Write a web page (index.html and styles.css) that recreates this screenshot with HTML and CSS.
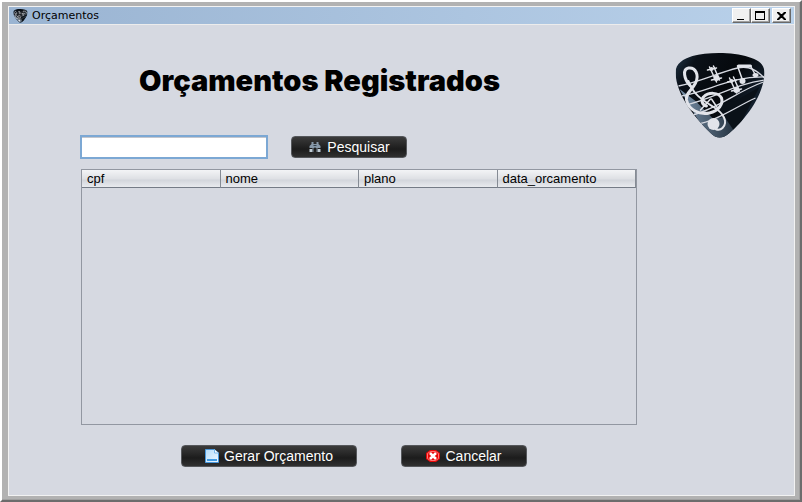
FILE: index.html
```html
<!DOCTYPE html>
<html lang="pt-BR">
<head>
<meta charset="utf-8">
<title>Orçamentos</title>
<link rel="stylesheet" href="styles.css">
</head>
<body>
<svg width="0" height="0" class="defs" aria-hidden="true">
  <defs>
    <linearGradient id="shine" x1="0" y1="0" x2="1" y2="0.6">
      <stop offset="0" stop-color="#22384a"/>
      <stop offset="0.2" stop-color="#0a1018"/>
      <stop offset="0.6" stop-color="#05080c"/>
      <stop offset="1" stop-color="#182838"/>
    </linearGradient>
    <linearGradient id="glow" x1="0" y1="0" x2="1" y2="0">
      <stop offset="0" stop-color="#7890a8"/>
      <stop offset="1" stop-color="#182430"/>
    </linearGradient>
    <linearGradient id="paper" x1="0" y1="0" x2="1" y2="1">
      <stop offset="0" stop-color="#b4dcfa"/>
      <stop offset="1" stop-color="#f0f8ff"/>
    </linearGradient>
    <clipPath id="pick-shape">
      <path d="M0 20C0 10 8 6 17 3C32 -1 58 -1 73 4C83 7 89 11 89 20C88 42 72 64 54 80C47 86 41 86 35 80C18 63 1 42 0 20Z"/>
    </clipPath>
    <symbol id="pick" viewBox="0 0 90 86">
      <g clip-path="url(#pick-shape)">
        <path fill="url(#shine)" d="M0 0H90V86H0Z"/>
        <path fill="url(#glow)" d="M4 36L20 48L38 66L68 60L54 86H34Z"/>
        <path fill="#0a1118" d="M36 52L60 48L84 34L60 80L45 58Z"/>
        <g fill="none" stroke="#d6d9e1" stroke-width="1.3">
          <path d="M3 33C24 29 42 20 62 15C74 12 82 18 90 26"/>
          <path d="M6 43C34 38 56 23 90 24"/>
          <path d="M10 52C36 47 60 30 90 27"/>
          <path d="M17 62C42 56 62 38 88 29"/>
          <path d="M23 71C43 67 60 54 80 45"/>
        </g>
      </g>
      <g fill="none" stroke="#e2e4ea" stroke-linecap="round">
        <path stroke-width="3" d="M15 33C8 26 7 16 13 15C20 14 24 22 20 30C16 38 10 40 11 47C13 57 24 62 34 60C43 58 48 51 46 45C43 39 33 39 28 44C25 48 27 52 31 53"/>
        <path stroke-width="2" d="M13 28C17 41 27 47 38 54C48 60 53 69 47 75C45 77 42 77 40 76"/>
        <path stroke-width="1.500" d="M36 46L42 55M25 57L35 46"/>
        <path stroke-width="1.500" d="M34 14L41 29M38 13L44 27M32 17L41 15M36 27L46 25M54 25L61 40M58 24L64 38M52 29L61 27M56 38L66 36"/>
        <path stroke-width="1.500" d="M67 27L62 13M80 22L75 13"/>
        <path stroke-width="3" d="M63 13H75"/>
      </g>
      <g fill="#e2e4ea">
        <circle cx="38" cy="71" r="6"/>
        <ellipse cx="67" cy="28" rx="3" ry="3"/>
        <ellipse cx="80" cy="22" rx="3" ry="2"/>
        <circle cx="36" cy="16" r="2"/><circle cx="41" cy="25" r="3"/>
        <circle cx="56" cy="28" r="2"/><circle cx="61" cy="37" r="3"/>
      </g>
    </symbol>
  </defs>
</svg>
<div class="frame">
  <div class="window">
    <header class="titlebar">
      <svg class="app-icon" aria-hidden="true"><use href="#pick"/></svg>
      <span class="caption">Orçamentos</span>
      <div class="controls">
        <button type="button" aria-label="Minimizar"><svg viewBox="0 0 15 11"><path d="M3 9H10V10H3Z"/></svg></button>
        <button type="button" aria-label="Maximizar"><svg viewBox="0 0 15 11"><path fill-rule="evenodd" d="M2 1H12V10H2ZM3 3V9H11V3Z"/></svg></button>
        <button type="button" class="close" aria-label="Fechar"><svg viewBox="0 0 15 11"><path d="M3 2H5L7 4H8L10 2H12V3L9 6L12 9V10H10L8 8H7L5 10H3V9L6 6L3 3Z"/></svg></button>
      </div>
    </header>
    <main class="content">
      <div class="main-column">
        <h1>Orçamentos Registrados</h1>
        <form class="search">
          <input type="text" aria-label="Pesquisar orçamentos">
          <button type="button" class="action find">
            <svg class="find-icon" viewBox="0 0 13 12" aria-hidden="true"><path fill="#8798a8" d="M3 1H5V3H8V1H10V3L12 5V7H1V5L3 3Z"/><path fill="#c0ccd5" d="M1 8H4V11H1ZM9 8H12V11H9Z"/><path fill="#7c8c9a" d="M4 7H5V11H4ZM8 7H9V11H8Z"/><path fill="#34424e" d="M5 4H8V5H5ZM6 6H7V7H6Z"/></svg>
            Pesquisar
          </button>
        </form>
        <div class="table-box">
          <table>
            <thead><tr><th>cpf</th><th>nome</th><th>plano</th><th>data_orcamento</th></tr></thead>
          </table>
        </div>
        <div class="actions">
          <button type="button" class="action generate">
            <svg class="icon" viewBox="0 0 14 14" aria-hidden="true"><path fill="url(#paper)" stroke="#4a98dc" d="M.5 .5H9.500L13.500 4V13.500H.5Z"/><path fill="#fff" stroke="#78b8ec" d="M9.500 .5V4H13.500"/><path fill="#3f9ae4" d="M2 10H12V12H2Z"/></svg>
            Gerar Orçamento
          </button>
          <button type="button" class="action cancel">
            <svg class="icon" viewBox="0 0 14 14" aria-hidden="true"><path fill="#e80808" d="M4 1H10L14 4V10L10 13H4L0 10V4Z"/><path fill="none" stroke="#ff7474" d="M4.500 2.500H9.500L12.500 4.500V9.500L9.500 11.500H4.500L1.500 9.500V4.500Z"/><path stroke="#fff" stroke-width="2.500" d="M4 4L10 10M10 4L4 10"/></svg>
            Cancelar
          </button>
        </div>
      </div>
      <svg class="logo" role="img" aria-label="Palheta com notas musicais"><use href="#pick"/></svg>
    </main>
  </div>
</div>
</body>
</html>
```
FILE: styles.css
```css
* {
  box-sizing: border-box;
}

body {
  margin: 0;
  background: #e4e4e4;
  font-family: "Liberation Sans", Arial, sans-serif;
  color: #000;
}

.defs {
  position: absolute;
}

.frame {
  display: flex;
  min-height: 100vh;
  padding: 4px 5px 4px 5px;
  border: 2px solid;
  border-color: #fff #6c6c6c #6c6c6c #fff;
  background: #b2b2b2;
  box-shadow: inset -1px -1px #a0a0a0;
}

.window {
  display: flex;
  flex: 1;
  flex-direction: column;
  margin-left: 1px;
  border: 1px solid #f2f2f2;
  background: #d6d9e1;
}

.titlebar {
  display: flex;
  align-items: center;
  height: 18px;
  padding: 0 3px 0 4px;
  border-bottom: 1px solid #ececec;
  background: linear-gradient(to right, #9ab4d2, #b9d1ea);
}

.app-icon {
  width: 15px;
  height: 14px;
}

.caption {
  flex: 1;
  margin-left: 4px;
  font: 11px "DejaVu Sans", sans-serif;
}

.controls {
  display: flex;
}

.controls button {
  display: flex;
  align-items: center;
  justify-content: center;
  width: 19px;
  height: 15px;
  padding: 0;
  border: 1px solid;
  border-color: #fff #696969 #696969 #fff;
  box-shadow: inset -1px -1px #a0a0a0;
  background: #f0f0f0;
}

.controls svg {
  width: 15px;
  height: 11px;
}

.controls .close {
  margin-left: 2px;
}

.content {
  display: flex;
  flex: 1;
  align-items: stretch;
  justify-content: space-between;
  gap: 38px;
  padding: 28px 28px 28px 72px;
}

.main-column {
  display: flex;
  flex: 1;
  flex-direction: column;
}

h1 {
  margin: 8px 0 0 58px;
  font: 900 29px/40px Inter, sans-serif;
  white-space: nowrap;
}

.search {
  display: flex;
  align-items: center;
  gap: 23px;
  height: 24px;
  margin: 34px 0 10px -1px;
}

.search input {
  width: 188px;
  height: 24px;
  padding: 0 6px;
  border: 2px solid #7ca8d4;
  outline: 0;
  background: #fff;
  box-shadow: inset 0 1px #c4c6cc;
  font: 14px "Liberation Sans", sans-serif;
}

.action {
  display: flex;
  align-items: center;
  justify-content: center;
  gap: 5px;
  height: 22px;
  padding: 0 8px;
  border: 1px solid #55575b;
  border-radius: 4px;
  background: linear-gradient(#3b3b3b, #1c1c1c 60%, #303030);
  color: #fff;
  font: 14px "Liberation Sans", sans-serif;
  white-space: nowrap;
}

.find {
  width: 116px;
}

.find-icon {
  width: 14px;
  height: 12px;
}

.icon {
  width: 14px;
  height: 14px;
}

.table-box {
  flex: 1;
  border: 1px solid #9297a1;
}

table {
  width: 100%;
  border-spacing: 0;
  table-layout: fixed;
}

th {
  height: 18px;
  padding: 0 5px;
  border-right: 1px solid #858b94;
  border-bottom: 1px solid #747b86;
  background: linear-gradient(#f3f4f6, #dfe1e5 50%, #d3d6dc 60%, #e8eaee);
  font: 13px/16px "Liberation Sans", sans-serif;
  text-align: left;
}

.actions {
  display: flex;
  gap: 44px;
  margin: 20px 0 0 100px;
}

.generate {
  width: 176px;
}

.cancel {
  width: 126px;
}

.logo {
  flex: none;
  width: 91px;
  height: 86px;
}
```
